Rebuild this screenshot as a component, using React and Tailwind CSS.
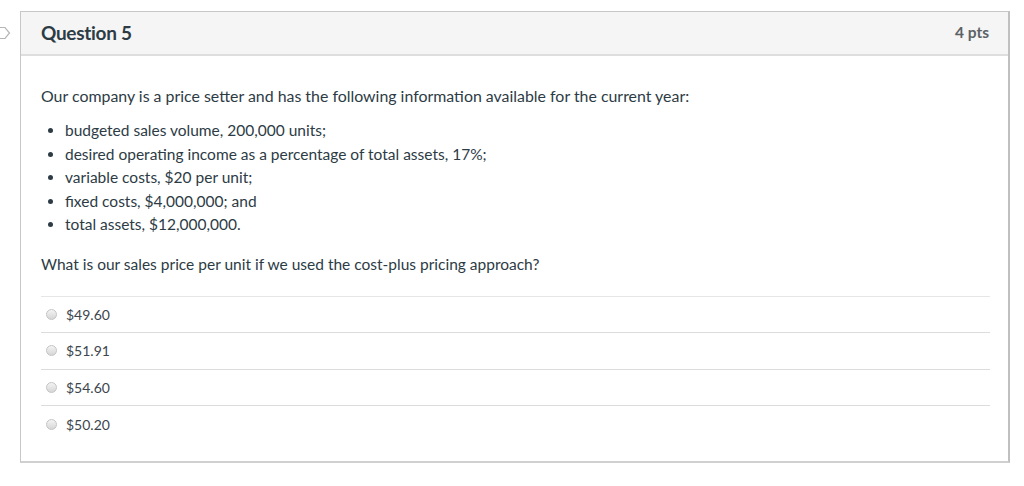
import React from "react";

const answers = ["$49.60", "$51.91", "$54.60", "$50.20"];

const bullets = [
  "budgeted sales volume, 200,000 units;",
  "desired operating income as a percentage of total assets, 17%;",
  "variable costs, $20 per unit;",
  "fixed costs, $4,000,000; and",
  "total assets, $12,000,000.",
];

export default function App() {
  return (
    <div className="relative w-[1024px] h-[486px] bg-white pt-[11px] pl-[20px]" style={{ fontFamily: "Lato, 'Open Sans', sans-serif" }}>
      {/* flag marker */}
      <svg className="absolute left-0 top-[26px]" width="12" height="14" viewBox="0 0 12 14">
        <path d="M-4 1.5h9l4.5 5.5-4.5 5.5h-9z" fill="white" stroke="#b5b5b5" strokeWidth="1.2" />
      </svg>

      <div className="w-[990px] h-[452px] border border-[#c7c7c7] border-b-2 border-b-[#d0d0d0] border-r-2 border-r-[#c0c0c0]">
        {/* Header */}
        <div className="h-[44px] bg-[#f5f5f5] border-b-2 border-[#dedede] flex items-center justify-between pl-[20px] pr-[19px]">
          <div className="text-[19px] font-bold text-[#2d3b45] tracking-[-0.3px]">Question 5</div>
          <div className="text-[15.5px] font-bold text-[#5b6266]">4 pts</div>
        </div>

        {/* Body */}
        <div className="pl-[20px] pr-[18px] pt-[30px] text-[#2d3b45]">
          <p className="text-[15.9px] leading-[20px]">
            Our company is a price setter and has the following information available for the current year:
          </p>
          <ul className="mt-[13px] pl-[24px] list-disc text-[15.5px] leading-[23.5px]">
            {bullets.map((b) => (
              <li key={b}>{b}</li>
            ))}
          </ul>
          <p className="mt-[17px] text-[15.5px] leading-[20px]">
            What is our sales price per unit if we used the cost-plus pricing approach?
          </p>

          <div className="mt-[22px] border-t border-[#e6e6e6]">
            {answers.map((a) => (
              <div key={a} className="h-[36.5px] flex items-center border-b border-[#dcdcdc] last:border-b-0 pl-[5px]">
                <span className="w-[11px] h-[11px] rounded-full border border-[#c4c4c4] bg-gradient-to-b from-[#f4f4f4] to-[#d6d6d6]" />
                <span className="ml-[9px] text-[14px] text-[#3d464d]">{a}</span>
              </div>
            ))}
          </div>
        </div>
      </div>
    </div>
  );
}
